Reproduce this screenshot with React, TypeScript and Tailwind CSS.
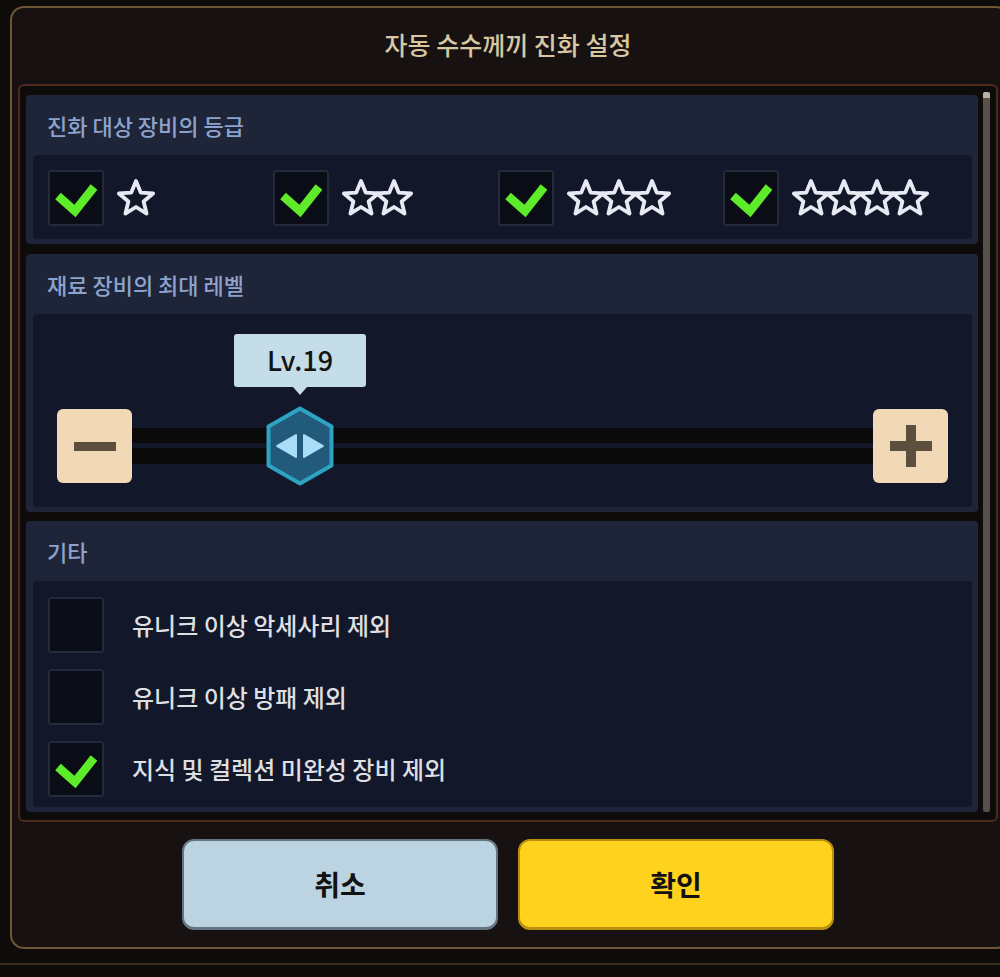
import React from "react";

const FONT = "font-['Noto_Sans_CJK_KR','Noto_Sans',sans-serif]";

function starPoints(cx: number, cy: number, R: number, r: number) {
  const pts: string[] = [];
  for (let i = 0; i < 10; i++) {
    const a = ((-90 + i * 36) * Math.PI) / 180;
    const rad = i % 2 === 0 ? R : r;
    pts.push(`${(cx + rad * Math.cos(a)).toFixed(2)},${(cy + rad * Math.sin(a)).toFixed(2)}`);
  }
  return pts.join(" ");
}

function Stars({ count }: { count: number }) {
  const step = 33;
  const w = 38 + step * (count - 1);
  return (
    <svg width={w} height={40} viewBox={`0 0 ${w} 40`} className="overflow-visible">
      {Array.from({ length: count }).map((_, i) => (
        <polygon
          key={i}
          points={starPoints(19 + i * step, 21, 18, 8)}
          fill="#121829"
          stroke="#e7e9f3"
          strokeWidth={3.8}
          strokeLinejoin="round"
        />
      ))}
    </svg>
  );
}

function CheckBox({ checked }: { checked: boolean }) {
  return (
    <div className="w-[56px] h-[56px] shrink-0 rounded-[3px] border-2 border-[#232a3c] bg-[#0a0d16]">
      {checked && (
        <svg width="52" height="52" viewBox="0 0 52 52">
          <polyline
            points="8,24 25,39 44,15"
            fill="none"
            stroke="#5eec2a"
            strokeWidth={8.5}
            strokeLinecap="butt"
            strokeLinejoin="miter"
          />
        </svg>
      )}
    </div>
  );
}

function Section({ title, className, children }: { title: string; className: string; children: React.ReactNode }) {
  return (
    <div className={`flex flex-col rounded-[4px] bg-[#1f2538] pl-[7px] pr-[6px] pb-[5px] ${className}`}>
      <div className="flex h-[60px] shrink-0 items-center pl-[14px] text-[22px] font-medium text-[#8da3cd]">
        {title}
      </div>
      <div className="flex-1 rounded-[4px] bg-[#121829]">{children}</div>
    </div>
  );
}

function Thumb() {
  return (
    <svg width="70" height="80" viewBox="0 0 70 80">
      <polygon
        points="35,2.5 66.5,20.5 66.5,59.5 35,77.5 3.5,59.5 3.5,20.5"
        fill="#225a7b"
        stroke="#2ea2c1"
        strokeWidth={4}
        strokeLinejoin="round"
      />
      <polygon points="12,40 31,29 31,51" fill="#a9ddf8" stroke="#a9ddf8" strokeWidth={2} strokeLinejoin="round" />
      <polygon points="58,40 39,29 39,51" fill="#a9ddf8" stroke="#a9ddf8" strokeWidth={2} strokeLinejoin="round" />
    </svg>
  );
}

const grades = [1, 2, 3, 4];

const extras = [
  { label: "유니크 이상 악세사리 제외", checked: false },
  { label: "유니크 이상 방패 제외", checked: false },
  { label: "지식 및 컬렉션 미완성 장비 제외", checked: true },
];

export default function App() {
  return (
    <div className={`h-[977px] w-[1000px] overflow-hidden bg-[#0e0c0b] pl-[10px] pt-[6px] ${FONT}`}>
      <div className="flex h-[943px] w-[1000px] flex-col rounded-[14px] border-2 border-[#6d5632] bg-[#171211]">
        {/* title */}
        <div className="ml-[6px] flex h-[76px] w-[980px] shrink-0 items-center justify-center pb-[2px] text-[25px] font-medium text-[#d7c8a3]">
          자동 수수께끼 진화 설정
        </div>

        {/* content panel */}
        <div className="ml-[6px] flex h-[738px] w-[980px] shrink-0 rounded-[6px] border-2 border-[#4e2a21] bg-[#0e0b0b] px-[6px] pb-[8px] pt-[9px]">
          <div className="flex w-[952px] flex-col gap-[10px]">
            <Section title="진화 대상 장비의 등급" className="h-[149px]">
              <div className="grid h-full grid-cols-[225px_225px_225px_225px] items-center pl-[15px] pt-[2px]">
                {grades.map((n) => (
                  <div key={n} className="flex items-center gap-[13px]">
                    <CheckBox checked />
                    <Stars count={n} />
                  </div>
                ))}
              </div>
            </Section>

            <Section title="재료 장비의 최대 레벨" className="h-[258px]">
              <div className="flex px-[24px] pt-[95px]">
                <button className="flex h-[74px] w-[75px] shrink-0 items-center justify-center rounded-[6px] bg-[#f1d8b7]">
                  <span className="block h-[9px] w-[42px] bg-[#5c4f3d]" />
                </button>
                <div className="relative flex flex-1 flex-col justify-center gap-[5px]">
                  <div className="h-[15px] bg-[#0a0a0b]" />
                  <div className="h-[16px] bg-[#0a0a0b]" />
                  {/* value bubble */}
                  <div className="absolute left-[102px] top-[-75px] flex flex-col items-center">
                    <div className="flex h-[53px] w-[132px] items-center justify-center rounded-[3px] bg-[#c5dde9] text-[27px] font-medium text-[#141414]">
                      Lv.19
                    </div>
                    <div className="h-0 w-0 border-x-[7px] border-t-[8px] border-x-transparent border-t-[#c5dde9]" />
                  </div>
                  <div className="absolute left-[133px] top-[-3px]">
                    <Thumb />
                  </div>
                </div>
                <button className="relative flex h-[74px] w-[75px] shrink-0 items-center justify-center rounded-[6px] bg-[#f1d8b7]">
                  <span className="block h-[10px] w-[42px] bg-[#5c4f3d]" />
                  <span className="absolute h-[42px] w-[10px] bg-[#5c4f3d]" />
                </button>
              </div>
            </Section>

            <Section title="기타" className="h-[291px] -mt-[1px]">
              <div className="flex flex-col gap-[16px] pl-[15px] pt-[16px]">
                {extras.map((e) => (
                  <div key={e.label} className="flex items-center gap-[28px]">
                    <CheckBox checked={e.checked} />
                    <span className="text-[24px] font-medium text-[#dedfe2]">{e.label}</span>
                  </div>
                ))}
              </div>
            </Section>
          </div>

          {/* scrollbar */}
          <div className="ml-[5px] mt-[-3px] flex h-[720px] w-[7px] flex-col rounded-[2px] bg-[#56514a]">
            <div className="h-[6px] rounded-t-[2px] bg-[#b9b2a4]" />
          </div>
        </div>

        {/* buttons */}
        <div className="ml-[6px] flex w-[980px] flex-1 justify-center gap-[20px] pt-[17px]">
          <button className="h-[91px] w-[316px] rounded-[12px] border-2 border-b-[3px] border-[#647481] bg-[#bcd4e1] text-[28px] font-bold text-[#121212]">
            취소
          </button>
          <button className="h-[91px] w-[316px] rounded-[12px] border-2 border-b-[3px] border-[#bb8f10] bg-[#ffd21d] text-[28px] font-bold text-[#121212]">
            확인
          </button>
        </div>
      </div>
      <div className="ml-[-10px] mt-[14px] h-[2px] w-[1000px] bg-[#3a2f1f]" />
    </div>
  );
}
